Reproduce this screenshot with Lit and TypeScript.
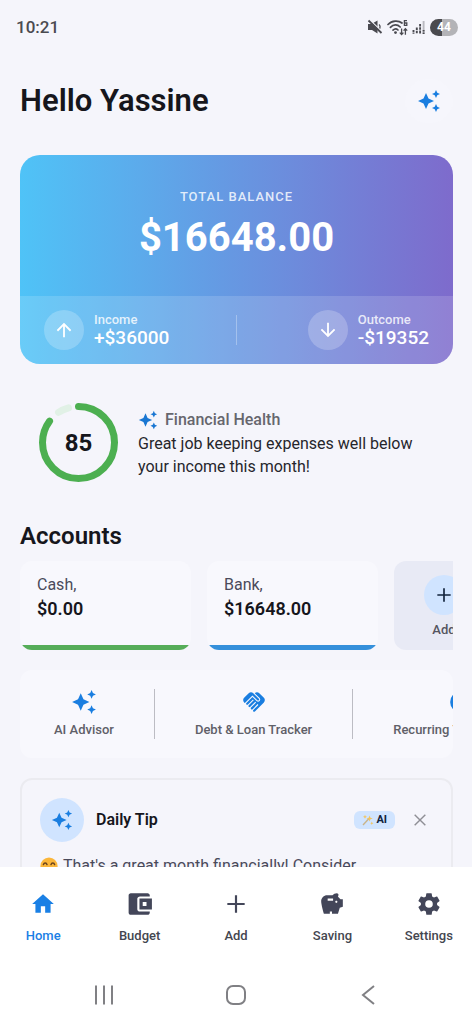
import { LitElement, html, css, svg } from "lit";
import { customElement, property, state } from "lit/decorators.js";
import { classMap } from "lit/directives/class-map.js";

const GLYPHS: Record<string, string> = {
  sparkle:
    "M19,1L17.74,3.75L15,5L17.74,6.26L19,9L20.25,6.26L23,5L20.25,3.75M9,4L6.5,9.5L1,12L6.5,14.5L9,20L11.5,14.5L17,12L11.5,9.5M19,15L17.74,17.74L15,19L17.74,20.25L19,23L20.25,20.25L23,19L20.25,17.74Z",
  up: "M13,20H11V8L5.5,13.5L4.08,12.08L12,4.16L19.92,12.08L18.5,13.5L13,8V20Z",
  down: "M11,4H13V16L18.5,10.5L19.92,11.92L12,19.84L4.08,11.92L5.5,10.5L11,16V4Z",
  plus: "M20,13H13V20H11V13H4V11H11V4H13V11H20V13Z",
  close:
    "M19,6.2L17.8,5L12,10.8L6.2,5L5,6.2L10.8,12L5,17.8L6.2,19L12,13.2L17.8,19L19,17.8L13.2,12L19,6.2Z",
  home: "M10,20V14H14V20H19V12H22L12,3L2,12H5V20H10Z",
  handshake:
    "M16.48 10.41c-.39.39-1.04.39-1.43 0l-4.47-4.46-7.05 7.04-.66-.63c-1.17-1.17-1.17-3.07 0-4.24l4.24-4.24c1.17-1.17 3.07-1.17 4.24 0L16.48 9c.39.39.39 1.02 0 1.41zm.7-2.12c.78.78.78 2.05 0 2.83-1.27 1.27-2.61.22-2.83 0l-3.76-3.76-5.57 5.57c-.39.39-.39 1.02 0 1.41.39.39 1.02.39 1.42 0l4.62-4.62.71.71-4.62 4.62c-.39.39-.39 1.02 0 1.41.39.39 1.02.39 1.42 0l4.62-4.62.71.71-4.62 4.62c-.39.39-.39 1.02 0 1.41.39.39 1.02.39 1.41 0l4.62-4.62.71.71-4.62 4.62c-.39.39-.39 1.02 0 1.41.39.39 1.02.39 1.41 0l8.32-8.34c1.17-1.17 1.17-3.07 0-4.24l-4.24-4.24c-1.15-1.15-3.01-1.17-4.18-.06l4.47 4.47z",
  repeat: "M2,12A10,10 0 0,1 22,12A10,10 0 0,1 2,12Z",
  wallet:
    "M21,19V20C21,21.1 20.1,22 19,22H3.5C2.4,22 1.5,21.1 1.5,20V4C1.5,2.9 2.4,2 3.5,2H19C20.1,2 21,2.9 21,4V5H12C10.6,5 9.5,6 9.5,7.2V16.8C9.5,18 10.6,19 12,19H21ZM11.5,17H23V7H11.5V17ZM14.5,10.2H18V13.8H14.5Z",
  piggy:
    "M19.83 7.5L17.56 5.23C17.63 4.81 17.74 4.42 17.88 4.08C17.96 3.9 18 3.71 18 3.5C18 2.67 17.33 2 16.5 2C14.86 2 13.41 2.79 12.5 4H7.5C4.46 4 2 6.46 2 9.5S4.5 21 4.5 21H10V19H12V21H17.5L19.18 15.41L22 14.47V7.5H19.83M13 9H8V7H13V9M16 11C15.45 11 15 10.55 15 10C15 9.45 15.45 9 16 9S17 9.45 17 10C17 10.55 16.55 11 16 11Z",
  cog: "M12,15.5A3.5,3.5 0 0,1 8.5,12A3.5,3.5 0 0,1 12,8.5A3.5,3.5 0 0,1 15.5,12A3.5,3.5 0 0,1 12,15.5M19.43,12.97C19.47,12.65 19.5,12.33 19.5,12C19.5,11.67 19.47,11.34 19.43,11L21.54,9.37C21.73,9.22 21.78,8.95 21.66,8.73L19.66,5.27C19.54,5.05 19.27,4.96 19.05,5.05L16.56,6.05C16.04,5.66 15.5,5.32 14.87,5.07L14.5,2.42C14.46,2.18 14.25,2 14,2H10C9.75,2 9.54,2.18 9.5,2.42L9.13,5.07C8.5,5.32 7.96,5.66 7.44,6.05L4.95,5.05C4.73,4.96 4.46,5.05 4.34,5.27L2.34,8.73C2.21,8.95 2.27,9.22 2.46,9.37L4.57,11C4.53,11.34 4.5,11.67 4.5,12C4.5,12.33 4.53,12.65 4.57,12.97L2.46,14.63C2.27,14.78 2.21,15.05 2.34,15.27L4.34,18.73C4.46,18.95 4.73,19.03 4.95,18.95L7.44,17.94C7.96,18.34 8.5,18.68 9.13,18.93L9.5,21.58C9.54,21.82 9.75,22 10,22H14C14.25,22 14.46,21.82 14.5,21.58L14.87,18.93C15.5,18.67 16.04,18.34 16.56,17.94L19.05,18.95C19.27,19.03 19.54,18.95 19.66,18.73L21.66,15.27C21.78,15.05 21.73,14.78 21.54,14.63L19.43,12.97Z",
};

@customElement("app-icon")
export class AppIcon extends LitElement {
  @property() name = "";
  @property({ type: Number }) size = 24;

  static styles = css`
    :host { display: inline-flex; flex: none; }
    svg { display: block; fill: currentColor; }
  `;

  render() {
    return html`<svg width=${this.size} height=${this.size} viewBox="0 0 24 24" aria-hidden="true">
      ${svg`<path fill-rule="evenodd" d=${GLYPHS[this.name] ?? ""}/>`}
    </svg>`;
  }
}

@customElement("status-bar")
export class StatusBar extends LitElement {
  static styles = css`
    :host { display: flex; align-items: center; justify-content: space-between; height: 54px; padding: 0 14px 0 16px; color: #4a4a50; }
    .time { font-size: 17px; line-height: 24px; font-weight: 500; }
    .signals { display: flex; align-items: center; gap: 4px; }
    svg { display: block; }
    .battery { display: grid; place-items: center; width: 28px; height: 17px; border-radius: 9px; background: linear-gradient(90deg, #4a4a4e 44%, #b3b3b7 44%); color: #fff; font-size: 12px; line-height: 17px; font-weight: 700; }
  `;

  render() {
    return html`
      <span class="time">10:21</span>
      <div class="signals">
        <svg width="16" height="16" viewBox="0 0 16 16" fill="currentColor" aria-hidden="true">
          <path d="M1 5H4.5L10.5 1.5V14.5L5 11H1Z"/>
          <path d="M12 5.5C13.4 6.5 13.4 9 12 10.5" fill="none" stroke="currentColor" stroke-width="1.3"/>
          <path d="M2.6 .8L15.6 13.3" stroke="#f5f5fb" stroke-width="1.4"/>
          <path d="M1.5 1.5L14.5 14" stroke="currentColor" stroke-width="1.8"/>
        </svg>
        <svg width="21" height="17" viewBox="0 0 21 17" aria-hidden="true">
          <g fill="none" stroke="currentColor" stroke-width="1.7" stroke-linecap="round">
            <path d="M1 5.5C5 1.2 11.5 1.2 15 4"/><path d="M3.4 8.4C6.4 5.2 10.4 5.2 13.2 8"/><path d="M6 11.2C7.6 9.6 9.6 9.6 11 11"/>
          </g>
          <circle cx="8.5" cy="13.6" r="1.4" fill="currentColor"/>
          <g fill="none" stroke="currentColor" stroke-width="1.3">
            <path d="M20 1.6H17.4V6.4H19.8V4H17.4"/>
            <path d="M14.6 9.5V15.5M12.8 13.6L14.6 15.6L16.4 13.6M18.4 15.8V9.8M16.6 11.6L18.4 9.6L20.2 11.6"/>
          </g>
        </svg>
        <svg width="14" height="16" viewBox="0 0 14 16" fill="none" stroke="currentColor" stroke-width="1.9" aria-hidden="true">
          <path d="M1.5 11V15M4.8 8.5V15M8.1 5V15" stroke-dasharray="2.6 .6"/>
          <path d="M11.6 2V15" stroke="#b9b9c0"/>
          <path d="M11.6 11V15" stroke-dasharray="1.6 .8"/>
        </svg>
        <span class="battery">44</span>
      </div>`;
  }
}

@customElement("balance-card")
export class BalanceCard extends LitElement {
  static styles = css`
    :host { display: block; border-radius: 20px; overflow: hidden; color: #fff; background: linear-gradient(90deg, #4fc3f7, #7e6bcc); }
    .total { display: flex; flex-direction: column; align-items: center; gap: 4px; padding: 32px 20px; }
    .caption { font-size: 13px; line-height: 20px; font-weight: 500; letter-spacing: 1px; color: rgba(255, 255, 255, 0.82); }
    .amount { font-size: 40px; line-height: 53px; font-weight: 700; }
    .flows { display: grid; grid-template-columns: 1fr 1px 1fr; align-items: center; padding: 14px 24px; background: rgba(255, 255, 255, 0.15); }
    .flow { display: flex; align-items: center; gap: 10px; }
    .flow.out { justify-content: flex-end; }
    .disc { display: grid; place-items: center; width: 40px; height: 40px; border-radius: 50%; background: rgba(255, 255, 255, 0.22); }
    .rule { height: 30px; background: rgba(255, 255, 255, 0.3); }
    .label { display: block; font-size: 13px; line-height: 16px; font-weight: 500; color: rgba(255, 255, 255, 0.82); }
    .value { display: block; font-size: 19px; line-height: 20px; font-weight: 500; }
  `;

  render() {
    return html`
      <div class="total">
        <span class="caption">TOTAL BALANCE</span>
        <strong class="amount">$16648.00</strong>
      </div>
      <div class="flows">
        <div class="flow">
          <span class="disc"><app-icon name="up" size="22"></app-icon></span>
          <div><span class="label">Income</span><span class="value">+$36000</span></div>
        </div>
        <span class="rule"></span>
        <div class="flow out">
          <span class="disc"><app-icon name="down" size="22"></app-icon></span>
          <div><span class="label">Outcome</span><span class="value">-$19352</span></div>
        </div>
      </div>`;
  }
}

@customElement("health-card")
export class HealthCard extends LitElement {
  @property({ type: Number }) score = 85;

  static styles = css`
    :host { display: flex; align-items: center; gap: 20px; padding: 0 19px; }
    .gauge { display: grid; flex: none; width: 79px; height: 79px; }
    .gauge > * { grid-area: 1 / 1; }
    .score { place-self: center; font-size: 24px; line-height: 32px; font-weight: 700; color: #16161c; }
    .text { flex: 1; min-width: 0; }
    .title { display: flex; align-items: center; gap: 7px; margin: 0; font-size: 16px; line-height: 24px; font-weight: 500; color: #66666d; }
    .title app-icon { color: #1976d2; }
    p { margin: 0; font-size: 16px; line-height: 23px; color: #26262c; }
  `;

  render() {
    const length = 2 * Math.PI * 36;
    const arc = (this.score / 100) * length;
    return html`
      <div class="gauge">
        <svg width="79" height="79" viewBox="0 0 79 79" fill="none" stroke-width="7" stroke-linecap="round" aria-hidden="true">
          <path d="M19.5 9.4A36 36 0 0 1 29.5 4.9" stroke="#e1f1e6"/>
          <circle cx="39.5" cy="39.5" r="36" stroke="#4caf50" stroke-dasharray="${arc} ${length}" transform="rotate(-90 39.5 39.5)"/>
        </svg>
        <span class="score">${this.score}</span>
      </div>
      <div class="text">
        <h2 class="title"><app-icon name="sparkle" size="20"></app-icon>Financial Health</h2>
        <p>Great job keeping expenses well below your income this month!</p>
      </div>`;
  }
}

@customElement("account-list")
export class AccountList extends LitElement {
  private accounts = [
    { name: "Cash,", amount: "$0.00", tone: "green" },
    { name: "Bank,", amount: "$16648.00", tone: "blue" },
  ];

  static styles = css`
    :host { display: flex; gap: 16px; overflow: hidden; }
    .account { flex: none; display: flex; flex-direction: column; overflow: hidden; width: 171px; height: 89px; border-radius: 12px; background: #f8f8fd; }
    .body { flex: 1; padding: 12px 17px 0; }
    .bar { height: 5px; }
    .green { background: #56ad59; }
    .blue { background: #3590db; }
    .name { display: block; font-size: 16px; line-height: 24px; color: #4a4a5a; }
    .amount { display: block; font-size: 18px; line-height: 24px; font-weight: 600; color: #16161c; }
    .add { flex: none; display: flex; flex-direction: column; align-items: center; gap: 6px; width: 100px; height: 89px; padding: 14px 0 0; border: 0; border-radius: 12px; background: #e8eaf5; font: 500 13px/18px Roboto, "Noto Sans", sans-serif; color: #55555f; }
    .disc { display: grid; place-items: center; width: 40px; height: 40px; border-radius: 50%; background: #d0e4ff; color: #12233c; }
  `;

  render() {
    return html`
      ${this.accounts.map(
        (a) => html`
          <div class="account">
            <div class="body"><span class="name">${a.name}</span><span class="amount">${a.amount}</span></div>
            <div class=${classMap({ bar: true, [a.tone]: true })}></div>
          </div>`
      )}
      <button class="add" type="button">
        <span class="disc"><app-icon name="plus" size="20"></app-icon></span>
        Add
      </button>`;
  }
}

@customElement("tool-strip")
export class ToolStrip extends LitElement {
  static styles = css`
    :host { display: flex; align-items: center; height: 88px; overflow: hidden; border-radius: 12px; background: #f8f8fd; }
    button { flex: none; display: flex; flex-direction: column; align-items: center; gap: 5px; padding: 0; border: 0; background: none; font: 500 13px/20px Roboto, "Noto Sans", sans-serif; color: #606068; white-space: nowrap; }
    app-icon { color: #1a7ee0; }
    .rule { flex: none; width: 1px; height: 50px; margin: 0 40px; background: #bcbcc3; }
    button:first-child { margin-left: 34px; }
  `;

  render() {
    return html`
      <button type="button"><app-icon name="sparkle" size="26"></app-icon>AI Advisor</button>
      <span class="rule"></span>
      <button type="button"><app-icon name="handshake" size="26"></app-icon>Debt &amp; Loan Tracker</button>
      <span class="rule"></span>
      <button type="button"><app-icon name="repeat" size="26"></app-icon>Recurring Transactions</button>`;
  }
}

@customElement("daily-tip")
export class DailyTip extends LitElement {
  static styles = css`
    :host { display: block; padding: 18px; border: 2px solid #ebebf0; border-radius: 12px; }
    header { display: flex; align-items: center; gap: 12px; }
    .disc { display: grid; place-items: center; width: 44px; height: 44px; border-radius: 50%; background: #d0e4ff; color: #1a7ee0; }
    h2 { flex: 1; margin: 0; font-size: 16px; line-height: 24px; font-weight: 600; color: #16161c; }
    .badge { display: flex; align-items: center; gap: 2px; padding: 0 8px; border-radius: 6px; background: #d0e4ff; font-size: 11px; line-height: 18px; font-weight: 700; color: #12233c; }
    .badge svg { display: block; }
    button { display: grid; place-items: center; width: 26px; height: 26px; padding: 0; border: 0; background: none; color: #8f8f95; }
    .tip { display: flex; align-items: center; gap: 5px; margin: 12px 0 0; font-size: 16px; line-height: 24px; color: #4a4a5a; white-space: nowrap; }
    .tip svg { flex: none; }
  `;

  render() {
    return html`
      <header>
        <span class="disc"><app-icon name="sparkle" size="22"></app-icon></span>
        <h2>Daily Tip</h2>
        <span class="badge">
          <svg width="12" height="12" viewBox="0 0 12 12" aria-hidden="true">
            <path d="M1 11L7 4.6" stroke="#c9b48a" stroke-width="1.4"/>
            <path d="M7.6 1.6L8.5 3.7L10.8 4.5L8.5 5.3L7.6 7.6L6.7 5.3L4.6 4.5L6.7 3.7ZM3 .8L3.6 2.2L5 2.8L3.6 3.4L3 4.8L2.4 3.4L1 2.8L2.4 2.2ZM9.8 7.6L10.3 8.7L11.5 9.2L10.3 9.7L9.8 11L9.3 9.7L8.2 9.2L9.3 8.7Z" fill="#f2c45e"/>
          </svg>
          AI
        </span>
        <button type="button" aria-label="Dismiss tip"><app-icon name="close" size="20"></app-icon></button>
      </header>
      <p class="tip">
        <svg width="18" height="18" viewBox="0 0 18 18" aria-hidden="true">
          <circle cx="9" cy="9" r="8.6" fill="#fbb63a"/>
          <path d="M3.4 7.6C4 5.4 6.4 5.4 7 7.6M11 7.6C11.6 5.4 14 5.4 14.6 7.6" fill="none" stroke="#6b431c" stroke-width="1.5" stroke-linecap="round"/>
          <path d="M4.5 10.5H13.5C13 15 5 15 4.5 10.5Z" fill="#fff" stroke="#6b431c"/>
        </svg>
        That's a great month financially! Consider
      </p>`;
  }
}

@customElement("tab-bar")
export class TabBar extends LitElement {
  @state() private active = "Home";

  private tabs = [
    { icon: "home", label: "Home" },
    { icon: "wallet", label: "Budget" },
    { icon: "plus", label: "Add" },
    { icon: "piggy", label: "Saving" },
    { icon: "cog", label: "Settings" },
  ];

  static styles = css`
    :host { display: block; background: #fff; }
    nav { display: flex; justify-content: space-between; padding: 24px 0 20px; margin: 0 -5px; }
    a { flex: 1; display: flex; flex-direction: column; align-items: center; gap: 8px; font-size: 13px; line-height: 21px; font-weight: 500; color: #44464f; text-decoration: none; }
    a app-icon { color: #434659; }
    a.active, a.active app-icon { color: #1a80e5; }
    .system { display: flex; justify-content: space-around; align-items: center; height: 58px; padding: 0 38px; }
    .system button { display: grid; place-items: center; width: 40px; height: 40px; padding: 0; border: 0; background: none; }
    .system svg { display: block; fill: none; stroke: #808084; stroke-width: 2; }
  `;

  private pick(e: Event, label: string) {
    e.preventDefault();
    this.active = label;
  }

  render() {
    return html`
      <nav>
        ${this.tabs.map(
          (t) => html`
            <a href="#" class=${classMap({ active: t.label === this.active })} @click=${(e: Event) => this.pick(e, t.label)}>
              <app-icon name=${t.icon} size="26"></app-icon>${t.label}
            </a>`
        )}
      </nav>
      <div class="system">
        <button type="button" aria-label="Recent apps">
          <svg width="22" height="22" viewBox="0 0 22 22"><path d="M3 1.5V20.5M11 1.5V20.5M19 1.5V20.5"/></svg>
        </button>
        <button type="button" aria-label="Home screen">
          <svg width="22" height="22" viewBox="0 0 22 22"><rect x="2" y="2" width="18" height="18" rx="6"/></svg>
        </button>
        <button type="button" aria-label="Back">
          <svg width="22" height="22" viewBox="0 0 22 22"><path d="M17 2L6 11L17 20"/></svg>
        </button>
      </div>`;
  }
}

@customElement("app-root")
export class AppRoot extends LitElement {
  static styles = css`
    :host { display: flex; flex-direction: column; height: 100vh; overflow: hidden; background: #f5f5fb; font-family: Roboto, "Noto Sans", sans-serif; color: #16161c; }
    status-bar, tab-bar { flex: none; }
    main { flex: 1; min-height: 0; overflow: hidden; padding: 25px 19px 0 20px; }
    .hello { display: flex; align-items: center; justify-content: space-between; margin-bottom: 32px; }
    h1 { margin: 0; font-size: 31px; line-height: 44px; font-weight: 600; }
    .assist { display: grid; place-items: center; width: 48px; height: 44px; padding: 0; border: 0; border-radius: 22px; background: #f6f6fc; color: #1a7ee0; }
    health-card { margin: 39px 0; }
    h2 { margin: 0 0 10px; font-size: 24px; line-height: 30px; font-weight: 600; }
    tool-strip { margin: 20px 0; }
  `;

  render() {
    return html`
      <status-bar></status-bar>
      <main>
        <div class="hello">
          <h1>Hello Yassine</h1>
          <button class="assist" type="button" aria-label="Assistant"><app-icon name="sparkle" size="24"></app-icon></button>
        </div>
        <balance-card></balance-card>
        <health-card score="85"></health-card>
        <h2>Accounts</h2>
        <account-list></account-list>
        <tool-strip></tool-strip>
        <daily-tip></daily-tip>
      </main>
      <tab-bar></tab-bar>`;
  }
}
